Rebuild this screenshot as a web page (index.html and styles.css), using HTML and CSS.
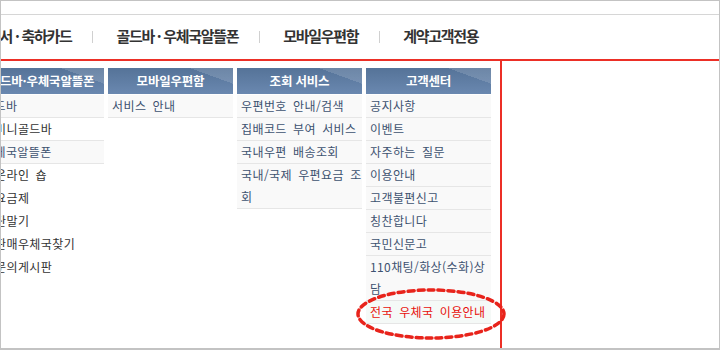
FILE: index.html
```html
<!DOCTYPE html>
<html lang="ko">
  <head>
    <meta charset="UTF-8" />
    <meta name="viewport" content="width=device-width, initial-scale=1.0" />
    <title>전체메뉴</title>
    <link rel="stylesheet" href="styles.css">
  </head>
  <body>
    <div class="frame">
      <div class="topbar"></div>
      <nav class="gnb">
        <div class="gnb-inner">
          <a href="#">엽서 · 축하카드</a>
          <span class="sep"></span>
          <a href="#">골드바 · 우체국알뜰폰</a>
          <span class="sep"></span>
          <a href="#">모바일우편함</a>
          <span class="sep"></span>
          <a href="#">계약고객전용</a>
        </div>
      </nav>

      <div class="panel">
        <div class="cols">
          <div class="col first">
            <h3>골드바·우체국알뜰폰</h3>
            <ul>
              <li class="cat">골드바</li>
              <li class="sub line">미니골드바</li>
              <li class="cat">우체국알뜰폰</li>
              <li class="sub">온라인 숍</li>
              <li class="sub">요금제</li>
              <li class="sub">단말기</li>
              <li class="sub">판매우체국찾기</li>
              <li class="sub">문의게시판</li>
            </ul>
          </div>
          <div class="col">
            <h3>모바일우편함</h3>
            <ul>
              <li>서비스 안내</li>
            </ul>
          </div>
          <div class="col">
            <h3>조회 서비스</h3>
            <ul>
              <li>우편번호 안내/검색</li>
              <li>집배코드 부여 서비스</li>
              <li>국내우편 배송조회</li>
              <li>국내/국제 우편요금 조회</li>
            </ul>
          </div>
          <div class="col">
            <h3>고객센터</h3>
            <ul>
              <li>공지사항</li>
              <li>이벤트</li>
              <li>자주하는 질문</li>
              <li>이용안내</li>
              <li>고객불편신고</li>
              <li>칭찬합니다</li>
              <li>국민신문고</li>
              <li>110채팅/화상(수화)상담</li>
              <li class="hot">전국 우체국 이용안내</li>
            </ul>
          </div>
        </div>

        <!-- annotation circle -->
        <svg class="mark" width="160" height="60" viewBox="0 0 160 60">
          <ellipse cx="80" cy="28" rx="73" ry="24" fill="none" stroke="#e8231b"
            stroke-width="3.5" stroke-dasharray="6 4" stroke-linecap="round" />
        </svg>
      </div>
    </div>
  </body>
</html>
```

FILE: styles.css
```css
body {
  margin: 0;
  font-family: "Noto Sans CJK KR", "Noto Sans", sans-serif;
  background-color: white;
}
.frame {
  width: 720px;
  height: 350px;
  box-sizing: border-box;
  border: 1px solid #c3c3c3;
  border-bottom-width: 2px;
  display: flex;
  flex-direction: column;
  overflow: hidden;
}
.topbar {
  height: 13px;
  border-bottom: 1px solid #d6d6d6;
}
.gnb {
  height: 44px;
  border-bottom: 2px solid #ec2f26;
}
.gnb-inner {
  display: flex;
  align-items: center;
  height: 100%;
  box-sizing: border-box;
  padding-bottom: 3px;
  margin-left: -14px;
}
.gnb a {
  color: #333;
  text-decoration: none;
  font-size: 15px;
  font-weight: bold;
  letter-spacing: -1.3px;
  white-space: nowrap;
}
.sep {
  width: 1px;
  height: 12px;
  background-color: #d0d0d0;
  margin: 2px 23px 0 21px;
}
.panel {
  flex: 1;
  position: relative;
  display: flex;
}
.cols {
  width: 501px;
  box-sizing: border-box;
  border-right: 2px solid #ec2f26;
  display: flex;
  gap: 4px;
  padding-top: 7px;
}
.col {
  width: 125px;
  flex: none;
}
.col.first {
  margin-left: -22px;
}
.col h3 {
  margin: 0;
  height: 26px;
  line-height: 26px;
  text-align: center;
  color: white;
  font-size: 12.5px;
  font-weight: bold;
  letter-spacing: -0.2px;
  white-space: nowrap;
  background-color: #5f7ea7;
  background-image: linear-gradient(200deg, rgba(255, 255, 255, 0.14) 0 22%, transparent 22%),
    linear-gradient(to bottom, #557398, #6a88b0);
}
.col ul {
  list-style: none;
  margin: 0;
  padding: 0;
}
.col li {
  font-size: 12px;
  line-height: 22px;
  letter-spacing: 0.4px;
  word-spacing: 2.5px;
  color: #3d5270;
  padding-left: 4px;
  background-color: #f9f9f9;
  border-bottom: 1px solid #e6e6e6;
}
.col li:first-child {
  margin-top: 1px;
}
.col li.sub {
  color: #333;
  background-color: white;
  border-bottom-color: transparent;
  padding-left: 16px;
}
.col li.sub.line {
  border-bottom-color: #e6e6e6;
}
.col li.hot {
  color: #e8100c;
  background-color: #f5f9f7;
}
.mark {
  position: absolute;
  left: 350px;
  top: 225px;
}
```
